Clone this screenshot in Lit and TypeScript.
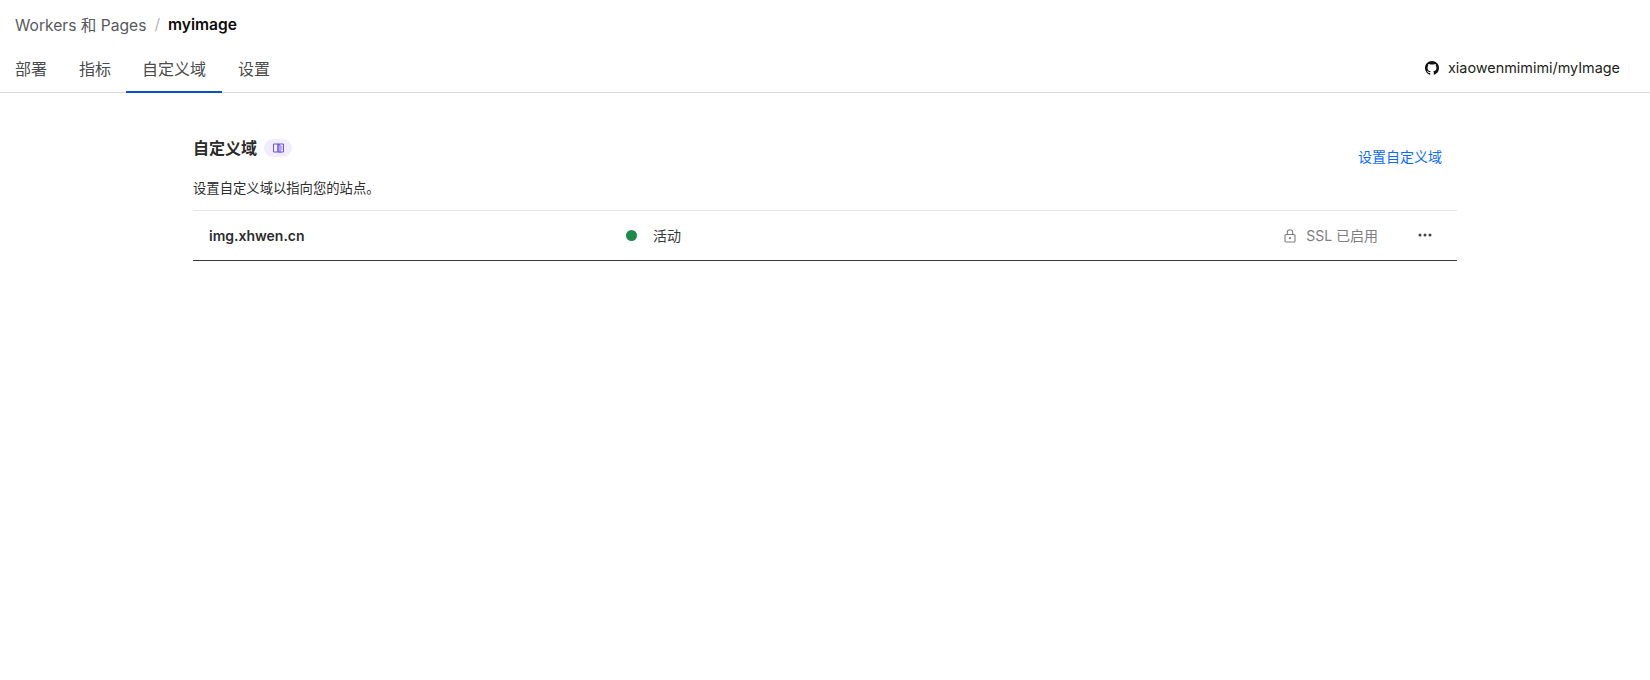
import { LitElement, html, css } from "lit";
import { customElement } from "lit/decorators.js";

@customElement("app-root")
export class AppRoot extends LitElement {
  static styles = css`
    :host { display: block; height: 680px; background: #fff; font-family: Inter, "Noto Sans CJK SC", sans-serif; color: #36393a; overflow: hidden; }
    .crumbs { display: flex; align-items: center; height: 48px; padding-left: 15px; font-size: 15.6px; color: #595b5c; }
    .sep { margin: 0 8px; color: #b6b8b9; }
    .crumbs b { color: #0a0a0a; font-weight: 600; }
    .nav { display: flex; justify-content: space-between; align-items: stretch; height: 44px; border-bottom: 1px solid #d9d9d9; padding-right: 30px; }
    .tabs { display: flex; }
    .tab { padding: 0 16px 4px; display: flex; align-items: center; font-size: 16px; color: #4a4c4d; margin-bottom: -1px; border-bottom: 2px solid transparent; box-sizing: border-box; }
    .tab:first-child { padding-left: 15px; }
    .tab:nth-child(2) { padding-right: 15px; }
    .tab.active { border-bottom-color: #0a4fc4; }
    .repo { display: flex; align-items: center; gap: 9px; font-size: 14.4px; color: #1d1f20; padding-bottom: 6px; }
    .repo svg { display: block; margin-top: 1px; }
    main { margin: 0 193px; padding-top: 45px; }
    .head { display: flex; justify-content: space-between; }
    .title { display: flex; align-items: center; gap: 7px; font-size: 16px; font-weight: 600; color: #2b2b2b; height: 20px; }
    .title-text { padding-bottom: 2px; }
    .pill { width: 28px; height: 18px; border-radius: 9px; background: #f1edfe; display: flex; align-items: center; justify-content: center; }
    .desc { font-size: 13.33px; line-height: 18px; color: #2b2d2e; margin-top: 21px; }
    .action { font-size: 14px; color: #0a6cff; padding: 8px 15px 0 0; }
    .row { display: flex; align-items: center; height: 51px; margin-top: 13px; border-top: 1px solid #e5e5e5; border-bottom: 1px solid #36393a; box-sizing: border-box; font-size: 14px; }
    .domain { width: 433px; padding-left: 16px; box-sizing: border-box; font-weight: 600; color: #2b2d2e; }
    .dot { width: 11px; height: 11px; border-radius: 50%; background: #1e8a4c; margin-right: 16px; }
    .status { flex: 1; color: #36393a; padding-bottom: 2px; }
    .ssl { display: flex; align-items: center; gap: 10px; color: #7c7e80; }
    .ssl span { padding-bottom: 2px; }
    .more { width: 64px; margin-left: 15px; display: flex; justify-content: center; padding-bottom: 2px; }
  `;

  render() {
    return html`
      <div class="crumbs"><span>Workers 和 Pages</span><span class="sep">/</span><b>myimage</b></div>
      <div class="nav">
        <div class="tabs">
          <div class="tab">部署</div>
          <div class="tab">指标</div>
          <div class="tab active">自定义域</div>
          <div class="tab">设置</div>
        </div>
        <div class="repo">
          <svg width="14" height="14" viewBox="0 0 16 16" fill="#111"><path d="M8 0C3.58 0 0 3.58 0 8c0 3.54 2.29 6.53 5.47 7.59.4.07.55-.17.55-.38 0-.19-.01-.82-.01-1.49-2.01.37-2.53-.49-2.69-.94-.09-.23-.48-.94-.82-1.13-.28-.15-.68-.52-.01-.53.63-.01 1.08.58 1.23.82.72 1.21 1.87.87 2.33.66.07-.52.28-.87.51-1.07-1.78-.2-3.64-.89-3.64-3.95 0-.87.31-1.59.82-2.15-.08-.2-.36-1.02.08-2.12 0 0 .67-.21 2.2.82.64-.18 1.32-.27 2-.27s1.36.09 2 .27c1.53-1.04 2.2-.82 2.2-.82.44 1.1.16 1.92.08 2.12.51.56.82 1.27.82 2.15 0 3.07-1.87 3.75-3.65 3.95.29.25.54.73.54 1.48 0 1.07-.01 1.93-.01 2.2 0 .21.15.46.55.38A8.01 8.01 0 0 0 16 8c0-4.42-3.58-8-8-8z"/></svg>
          <span>xiaowenmimimi/myImage</span>
        </div>
      </div>
      <main>
        <div class="head">
          <div>
            <div class="title"><span class="title-text">自定义域</span>
              <span class="pill"><svg width="11" height="10" viewBox="0 0 11 10" fill="none" stroke="#6a50e0" stroke-width="1"><path d="M.5 1h4.5v8H.5zM5 1h5.5v8H5zM5 1l2 1v8"/><path d="M8 4h1.5M8 6h1.5" stroke-width=".7"/></svg></span>
            </div>
            <div class="desc">设置自定义域以指向您的站点。</div>
          </div>
          <div class="action">设置自定义域</div>
        </div>
        <div class="row">
          <div class="domain">img.xhwen.cn</div>
          <span class="dot"></span>
          <div class="status">活动</div>
          <div class="ssl">
            <svg width="12" height="14" viewBox="0 0 12 14" fill="none" stroke="#7c7e80" stroke-width="1.1"><rect x="1" y="5.5" width="10" height="7.5" rx="1"/><path d="M3.3 5.5V3.4a2.7 2.7 0 0 1 5.4 0v2.1"/><circle cx="6" cy="9.2" r="1.1" fill="#7c7e80" stroke="none"/></svg>
            <span>SSL 已启用</span>
          </div>
          <div class="more"><svg width="14" height="4" viewBox="0 0 14 4" fill="#444"><circle cx="2" cy="2" r="1.5"/><circle cx="7" cy="2" r="1.5"/><circle cx="12" cy="2" r="1.5"/></svg></div>
        </div>
      </main>
    `;
  }
}
